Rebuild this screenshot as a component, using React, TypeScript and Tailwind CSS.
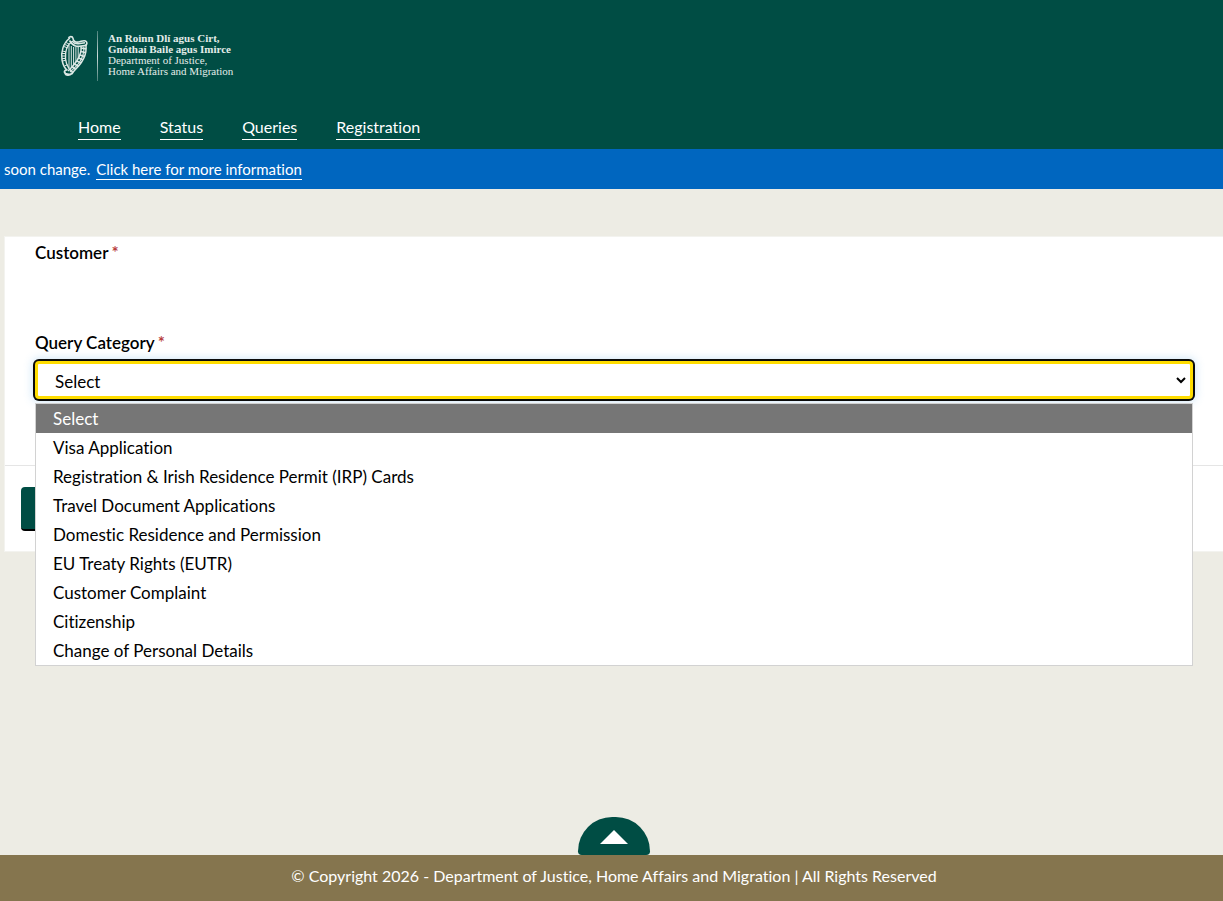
import { useState } from "react";

const NAV_LINKS = ["Home", "Status", "Queries", "Registration"];

const CATEGORIES = [
  "Select",
  "Visa Application",
  "Registration & Irish Residence Permit (IRP) Cards",
  "Travel Document Applications",
  "Domestic Residence and Permission",
  "EU Treaty Rights (EUTR)",
  "Customer Complaint",
  "Citizenship",
  "Change of Personal Details",
];

function HarpLogo() {
  return (
    <svg viewBox="0 0 28 42" className="h-[42px] w-7" fill="none" stroke="#dce8e5" aria-hidden="true">
      {/* neck and pillar */}
      <path d="M10 3C3 8 .8 17 2 25c1 5 2.500 8 5 10" strokeWidth="1.500" />
      <path d="M12 6.500C7 10 5 17 5.500 24c.5 4.500 1.700 7 3.500 9.500" strokeWidth="1.400" />
      <path d="M6 7.500l3 1.500M4.800 9.500l3.300 1.300M3.800 11.500l3.600 1.300M2.300 16l3.600.8M2 18.500h4M1.800 21h4M2 23.500h4M2.500 26l3.600-.8M4.500 31l3.200-1.400" strokeWidth="1" />
      <path d="M8.500 3.500c.5-2.500 4-2.500 4.500-.2.500 2.700 2.500 4.200 5.500 3.700 3-.6 5-2 7-1 2.200 1.200 1.500 4.600-.8 4.600-4 .2-6 1.400-9.200.4-3-1-4.500-3-6-5.500" strokeWidth="1.600" />
      <path d="M12 6c2 2.500 4.500 3.300 8 2.500l5-.8" strokeWidth="1.400" />
      {/* soundboard */}
      <path d="M25.800 9.500c1 6-1 13-4.500 18-3 4.500-6.500 7.500-9.500 11" strokeWidth="1.500" />
      <path d="M21 11c.6 5-1.200 10.500-4.300 15C13.700 30.500 11 33.500 8 36" strokeWidth="1.500" />
      <path d="M21 13l5 .8M21 16.500l4.800 1.300M20 20l4.800 1.500M18.500 23l4.500 1.800M16.800 26l4.200 2M14.500 29l4 2.200M12 31.800l3.600 2.600M9.500 34.200l3 2.800" strokeWidth="1.700" />
      <path d="M23.800 12c.5 5-1.500 11-4.500 15.500S13 34 10 37" strokeWidth="1.100" />
      <path d="M7.500 35c-3-.5-4 2.500-1.800 3.600 3 1.400 6.800 1 7.300-1.600M4.800 37.500c.8 3.500 5 3.300 6.700 1" strokeWidth="1.700" />
      {/* strings */}
      <path d="M9 10v24M11.300 11v21M13.600 12v18M15.900 12v15M18.200 12v12" strokeWidth="1" />
    </svg>
  );
}

function Header() {
  return (
    <header className="bg-[#004d44] text-white">
      <div className="flex h-[111px] items-center">
        <a href="#" className="ml-[60px] flex items-center">
          <HarpLogo />
          <span className="ml-[9px] h-[50px] w-px bg-gradient-to-b from-white/30 via-white/80 to-white/30" />
          <span className="ml-[10px] pb-px font-['Liberation_Serif',serif] text-[11px] leading-[11px] text-[#e3ece9]">
            <span className="block font-bold">An Roinn Dlí agus Cirt,</span>
            <span className="block font-bold">Gnóthaí Baile agus Imirce</span>
            <span className="block">Department of Justice,</span>
            <span className="block">Home Affairs and Migration</span>
          </span>
        </a>
      </div>
      <nav className="flex h-[38px] items-start gap-[39px] pl-[78px]">
        {NAV_LINKS.map((label) => (
          <a key={label} href="#" className="border-b border-white pt-1.5 pb-0.5 text-[16px] leading-5">
            {label}
          </a>
        ))}
      </nav>
    </header>
  );
}

function RequiredLabel({ text, htmlFor }: { text: string; htmlFor: string }) {
  return (
    <label htmlFor={htmlFor} className="block text-[17px] leading-[26px] font-semibold text-black">
      {text}
      <span className="pl-[3px] text-[#b8403d]">*</span>
    </label>
  );
}

export default function App() {
  const [category, setCategory] = useState(CATEGORIES[0]);

  return (
    <div className="flex min-h-screen flex-col overflow-x-hidden bg-[#edece4] font-['Lato',sans-serif] text-black [font-variant-ligatures:none]">
      <Header />

      <div className="flex h-10 items-center gap-[6px] bg-[#0066bf] pl-1 text-[15px] leading-5 text-white">
        <span>soon change.</span>
        <a href="#" className="border-b border-white pt-px">Click here for more information</a>
      </div>

      <main className="flex-1 pt-[47px] pl-1">
        <form className="border border-r-0 border-[#f3f3ef] bg-white" onSubmit={(e) => e.preventDefault()}>
          <div className="px-[30px] pt-[3px] pb-[66px]">
            <div className="h-[90px]">
              <RequiredLabel text="Customer" htmlFor="customer" />
              <output id="customer" />
            </div>

            <RequiredLabel text="Query Category" htmlFor="category" />
            <div className="relative mt-[5px]">
              <select
                id="category"
                value={category}
                onChange={(e) => setCategory(e.target.value)}
                className="block h-[38px] w-full appearance-none rounded-sm border-[3px] border-[#ffdd00] bg-white px-[17px] pt-[3px] text-[17px] text-black shadow-[0_0_0_2px_#0b0c0c,0_0_9px_3px_rgba(102,175,233,0.3)] outline-none"
              >
                {CATEGORIES.map((c) => (
                  <option key={c}>{c}</option>
                ))}
              </select>
              <svg viewBox="0 0 10 7" className="pointer-events-none absolute top-4 right-[7px] h-[7px] w-[10px]" fill="none" stroke="#000" strokeWidth="2" aria-hidden="true">
                <path d="M1 1l4 4 4-4" />
              </svg>

              {/* Open option list */}
              <ul role="listbox" aria-label="Query Category" className="absolute inset-x-0 top-full z-10 mt-1 border border-[#d2d2d2] bg-white">
                {CATEGORIES.map((c) => (
                  <li
                    key={c}
                    role="option"
                    aria-selected={c === category}
                    onClick={() => setCategory(c)}
                    className="cursor-default pl-[17px] text-[17px] leading-[29px] aria-selected:bg-[#767676] aria-selected:text-white"
                  >
                    {c}
                  </li>
                ))}
              </ul>
            </div>
          </div>

          <div className="border-t border-[#e5e5e5] px-4 pt-[21px] pb-5">
            <button type="submit" aria-label="Submit" className="block h-11 w-28 rounded-[4px] border-b-2 border-black bg-[#004d44]" />
          </div>
        </form>
      </main>

      <div className="flex justify-center pl-[5px]">
        <button
          type="button"
          aria-label="Back to top"
          onClick={() => window.scrollTo({ top: 0 })}
          className="flex h-[38px] w-[72px] justify-center rounded-t-[36px] rounded-b-[4px] bg-[#004d44] pt-[13px]"
        >
          <svg viewBox="0 0 28 14" className="h-[14px] w-7" fill="#fff" aria-hidden="true">
            <path d="M14 0l14 14H0z" />
          </svg>
        </button>
      </div>
      <footer className="bg-[#85754e] pt-2 pb-3 pl-[5px] text-center text-[16px] leading-[26px] text-white">
        © Copyright 2026 - Department of Justice, Home Affairs and Migration | All Rights Reserved
      </footer>
    </div>
  );
}
